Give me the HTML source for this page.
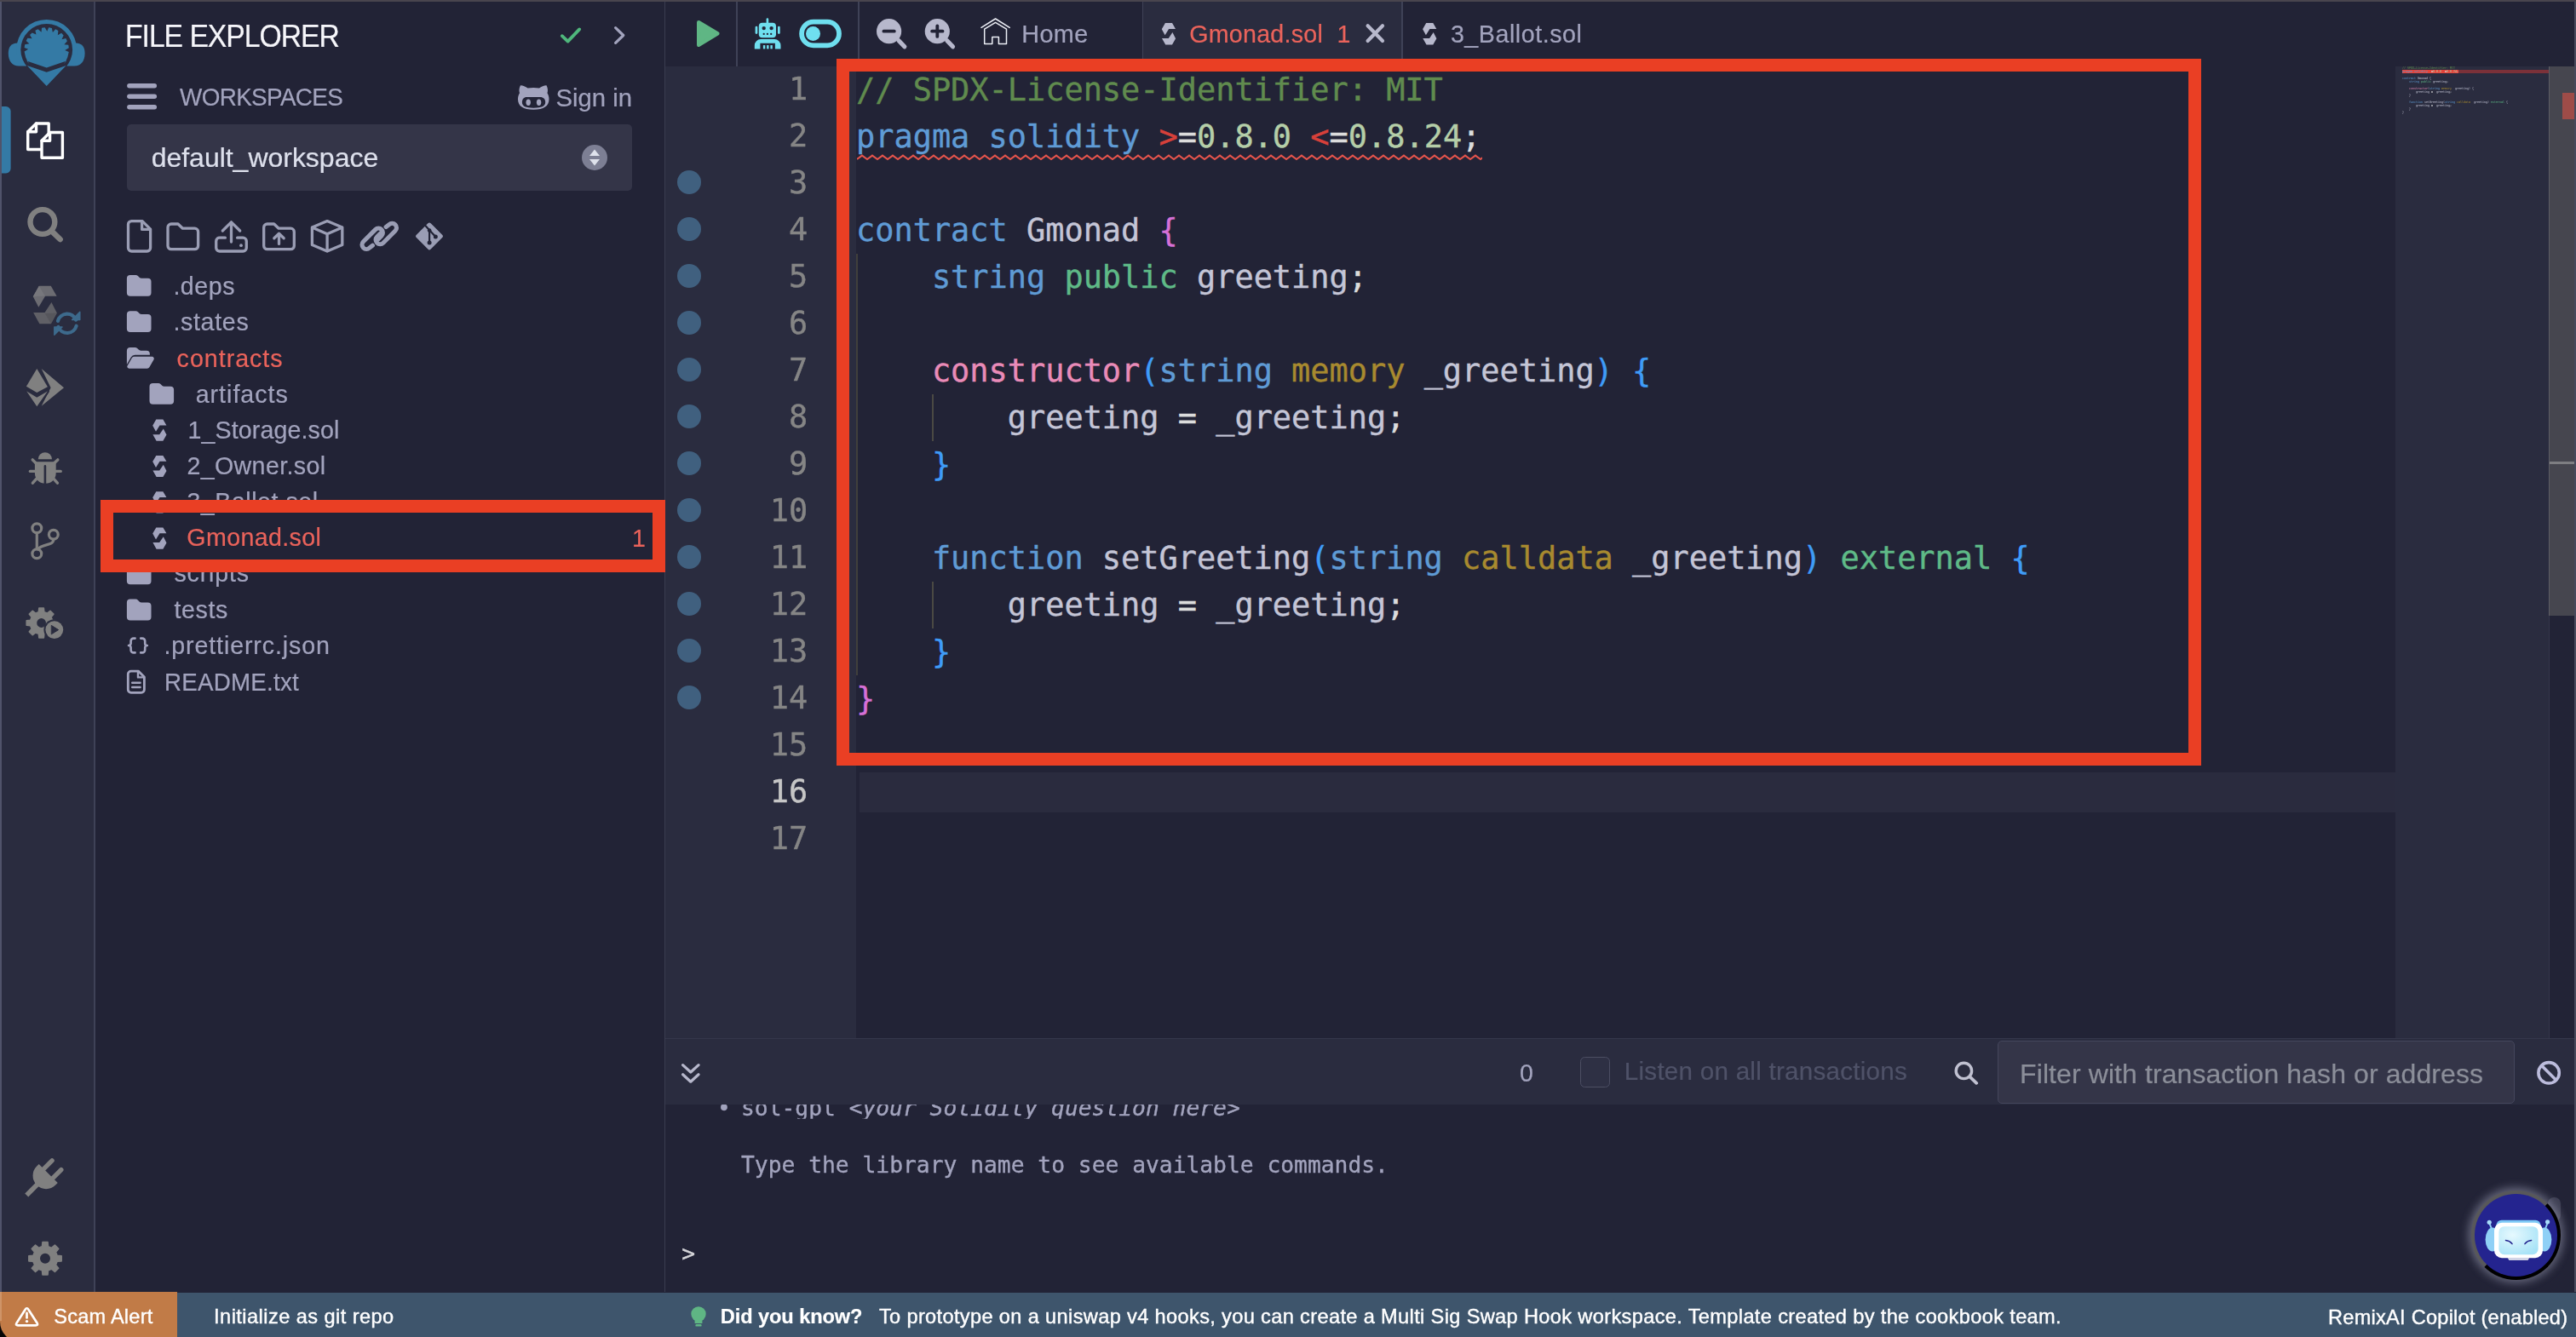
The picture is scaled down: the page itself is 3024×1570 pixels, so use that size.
<!DOCTYPE html>
<html lang="en"><head><meta charset="utf-8"><title>Remix - Ethereum IDE</title><style>
html,body{margin:0;padding:0}
body{width:3024px;height:1570px;overflow:hidden;background:#222336;position:relative;font-family:"Liberation Sans",sans-serif}
.t{position:absolute;white-space:pre;line-height:1;font-family:"Liberation Sans",sans-serif;-webkit-text-stroke:0.22px currentColor}
.m{font-family:"DejaVu Sans Mono","Liberation Mono",monospace;-webkit-text-stroke:0.36px currentColor}
.code{position:absolute;white-space:pre;font-family:"DejaVu Sans Mono","Liberation Mono",monospace;-webkit-text-stroke:0.42px currentColor}
</style></head>
<body>
<div style="position:absolute;left:0px;top:0px;width:3024px;height:2px;background:#49454e;"></div>
<div style="position:absolute;left:0px;top:2px;width:2px;height:1515px;background:#50536a;"></div>
<div style="position:absolute;left:2px;top:2px;width:108px;height:1515px;background:#2a2c3f;"></div>
<div style="position:absolute;left:110px;top:2px;width:2px;height:1515px;background:#3f4257;"></div>
<div style="position:absolute;left:779.5px;top:2px;width:1.5px;height:1515px;background:#3a3c50;"></div>
<div style="position:absolute;left:1342px;top:2px;width:304px;height:76px;background:#2a2c3f;"></div>
<div style="position:absolute;left:864.25px;top:2px;width:1.5px;height:76px;background:#3f4257;"></div>
<div style="position:absolute;left:1007.25px;top:2px;width:1.5px;height:76px;background:#3f4257;"></div>
<div style="position:absolute;left:1340.75px;top:2px;width:1.5px;height:76px;background:#3f4257;"></div>
<div style="position:absolute;left:1645.25px;top:2px;width:1.5px;height:76px;background:#3f4257;"></div>
<div style="position:absolute;left:781px;top:78px;width:224px;height:1141px;background:#2a2c3f;"></div>
<div style="position:absolute;left:2812px;top:78px;width:180px;height:1141px;background:#2a2c3f;"></div>
<div style="position:absolute;left:1009px;top:906.5px;width:1803px;height:47px;background:#2a2b3e;"></div>
<div style="position:absolute;left:2992px;top:78px;width:30px;height:645px;background:#46464f;border-left:1px solid #5c5c64;box-sizing:border-box"></div>
<div style="position:absolute;left:2992px;top:723px;width:1px;height:496px;background:#35364a;"></div>
<div style="position:absolute;left:2993px;top:541.5px;width:29px;height:3.5px;background:#7e7e82;"></div>
<div style="position:absolute;left:3007.5px;top:109px;width:14.5px;height:31px;background:#9e4c48;"></div>
<div style="position:absolute;left:3022px;top:2px;width:2px;height:1515px;background:#484a5c;"></div>
<div style="position:absolute;left:781px;top:1219.4px;width:2241px;height:77.8px;background:#2a2c3f;border-top:1px solid #35374b;box-sizing:border-box"></div>
<div style="position:absolute;left:2990.5px;top:1406px;width:15px;height:28px;background:#3d3e52;border-radius:7px"></div>
<div style="position:absolute;left:0px;top:1517.6px;width:3024px;height:53px;background:#3e556c;"></div>
<div style="position:absolute;left:0px;top:1545px;width:24px;height:25px;background:#050505;"></div>
<div style="position:absolute;left:0px;top:1517px;width:208px;height:59px;background:#c17b47;border-bottom-left-radius:24px"></div>
<div style="position:absolute;left:0px;top:1517px;width:2px;height:34px;background:#cf9468;"></div>
<div style="position:absolute;left:149px;top:146px;width:593px;height:78px;background:#343548;border-radius:5px"></div>
<svg style="position:absolute;left:682.8px;top:169.7px;overflow:visible;" width="30" height="30" viewBox="0 0 30 30"><circle cx="15" cy="15" r="15" fill="#7d7f94"/><path d="M15 5.5 L21 13 H9Z M15 24.5 L21 17 H9Z" fill="#dfe2ec"/></svg>
<div style="position:absolute;left:1855.3px;top:1241.4px;width:34.5px;height:35.2px;background:#2e3044;border:1.6px solid #4c4e63;border-radius:5.5px;box-sizing:border-box"></div>
<div style="position:absolute;left:2344.6px;top:1222.4px;width:607.4px;height:74px;background:#343548;border:1.5px solid #45475c;border-radius:5px;box-sizing:border-box"></div>
<div style="position:absolute;left:794.6px;top:200.29999999999998px;width:28px;height:28px;background:#40607f;border-radius:50%"></div>
<div style="position:absolute;left:794.6px;top:255.3px;width:28px;height:28px;background:#40607f;border-radius:50%"></div>
<div style="position:absolute;left:794.6px;top:310.3px;width:28px;height:28px;background:#40607f;border-radius:50%"></div>
<div style="position:absolute;left:794.6px;top:365.3px;width:28px;height:28px;background:#40607f;border-radius:50%"></div>
<div style="position:absolute;left:794.6px;top:420.3px;width:28px;height:28px;background:#40607f;border-radius:50%"></div>
<div style="position:absolute;left:794.6px;top:475.3px;width:28px;height:28px;background:#40607f;border-radius:50%"></div>
<div style="position:absolute;left:794.6px;top:530.3000000000001px;width:28px;height:28px;background:#40607f;border-radius:50%"></div>
<div style="position:absolute;left:794.6px;top:585.3000000000001px;width:28px;height:28px;background:#40607f;border-radius:50%"></div>
<div style="position:absolute;left:794.6px;top:640.3000000000001px;width:28px;height:28px;background:#40607f;border-radius:50%"></div>
<div style="position:absolute;left:794.6px;top:695.3000000000001px;width:28px;height:28px;background:#40607f;border-radius:50%"></div>
<div style="position:absolute;left:794.6px;top:750.3000000000001px;width:28px;height:28px;background:#40607f;border-radius:50%"></div>
<div style="position:absolute;left:794.6px;top:805.3000000000001px;width:28px;height:28px;background:#40607f;border-radius:50%"></div>
<div class="code" style="left:1005.0px;top:77.83px;font-size:36.92px;line-height:55px;height:55px;"><span style="color:#608b4e">// SPDX-License-Identifier: MIT</span></div>
<div class="code" style="left:1005.0px;top:132.83px;font-size:36.92px;line-height:55px;height:55px;"><span style="color:#5f9bd5">pragma solidity </span><span style="color:#d7403a">&gt;</span><span style="color:#dcdcdc">=</span><span style="color:#b5cea8">0.8.0 </span><span style="color:#d7403a">&lt;</span><span style="color:#dcdcdc">=</span><span style="color:#b5cea8">0.8.24</span><span style="color:#dcdcdc">;</span></div>
<div class="code" style="left:1005.0px;top:187.83px;font-size:36.92px;line-height:55px;height:55px;"></div>
<div class="code" style="left:1005.0px;top:242.83px;font-size:36.92px;line-height:55px;height:55px;"><span style="color:#5f9bd5">contract </span><span style="color:#c4c5d6">Gmonad </span><span style="color:#d670d6">{</span></div>
<div class="code" style="left:1005.0px;top:297.83px;font-size:36.92px;line-height:55px;height:55px;"><span style="color:#5f9bd5">    string </span><span style="color:#5fba87">public </span><span style="color:#c4c5d6">greeting</span><span style="color:#dcdcdc">;</span></div>
<div class="code" style="left:1005.0px;top:352.83px;font-size:36.92px;line-height:55px;height:55px;"></div>
<div class="code" style="left:1005.0px;top:407.83px;font-size:36.92px;line-height:55px;height:55px;"><span style="color:#e98bb8">    constructor</span><span style="color:#3f9cf7">(</span><span style="color:#5f9bd5">string </span><span style="color:#a88a2f">memory </span><span style="color:#c4c5d6">_greeting</span><span style="color:#3f9cf7">) {</span></div>
<div class="code" style="left:1005.0px;top:462.83px;font-size:36.92px;line-height:55px;height:55px;"><span style="color:#c4c5d6">        greeting </span><span style="color:#dcdcdc">= </span><span style="color:#c4c5d6">_greeting</span><span style="color:#dcdcdc">;</span></div>
<div class="code" style="left:1005.0px;top:517.83px;font-size:36.92px;line-height:55px;height:55px;"><span style="color:#3f9cf7">    }</span></div>
<div class="code" style="left:1005.0px;top:572.83px;font-size:36.92px;line-height:55px;height:55px;"></div>
<div class="code" style="left:1005.0px;top:627.83px;font-size:36.92px;line-height:55px;height:55px;"><span style="color:#5f9bd5">    function </span><span style="color:#c4c5d6">setGreeting</span><span style="color:#3f9cf7">(</span><span style="color:#5f9bd5">string </span><span style="color:#a88a2f">calldata </span><span style="color:#c4c5d6">_greeting</span><span style="color:#3f9cf7">) </span><span style="color:#5fba87">external </span><span style="color:#3f9cf7">{</span></div>
<div class="code" style="left:1005.0px;top:682.83px;font-size:36.92px;line-height:55px;height:55px;"><span style="color:#c4c5d6">        greeting </span><span style="color:#dcdcdc">= </span><span style="color:#c4c5d6">_greeting</span><span style="color:#dcdcdc">;</span></div>
<div class="code" style="left:1005.0px;top:737.83px;font-size:36.92px;line-height:55px;height:55px;"><span style="color:#3f9cf7">    }</span></div>
<div class="code" style="left:1005.0px;top:792.83px;font-size:36.92px;line-height:55px;height:55px;"><span style="color:#d670d6">}</span></div>
<div class="code" style="left:1005.0px;top:847.83px;font-size:36.92px;line-height:55px;height:55px;"></div>
<div class="code" style="left:1005.0px;top:902.83px;font-size:36.92px;line-height:55px;height:55px;"></div>
<div class="code" style="left:1005.0px;top:957.83px;font-size:36.92px;line-height:55px;height:55px;"></div>
<div style="position:absolute;left:1005.3px;top:297.5px;width:1.6px;height:495px;background:#403f3c;"></div>
<div style="position:absolute;left:1094.2px;top:462.5px;width:1.6px;height:55px;background:#4a4943;"></div>
<div style="position:absolute;left:1094.2px;top:682.5px;width:1.6px;height:55px;background:#4a4943;"></div>
<svg style="position:absolute;left:1005.6px;top:180.6px;overflow:visible;overflow:hidden" width="734.4" height="8" viewBox="0 0 734.4 8"><path d="M0 6 L6 1.6 L12 6 L18 1.6 L24 6 L30 1.6 L36 6 L42 1.6 L48 6 L54 1.6 L60 6 L66 1.6 L72 6 L78 1.6 L84 6 L90 1.6 L96 6 L102 1.6 L108 6 L114 1.6 L120 6 L126 1.6 L132 6 L138 1.6 L144 6 L150 1.6 L156 6 L162 1.6 L168 6 L174 1.6 L180 6 L186 1.6 L192 6 L198 1.6 L204 6 L210 1.6 L216 6 L222 1.6 L228 6 L234 1.6 L240 6 L246 1.6 L252 6 L258 1.6 L264 6 L270 1.6 L276 6 L282 1.6 L288 6 L294 1.6 L300 6 L306 1.6 L312 6 L318 1.6 L324 6 L330 1.6 L336 6 L342 1.6 L348 6 L354 1.6 L360 6 L366 1.6 L372 6 L378 1.6 L384 6 L390 1.6 L396 6 L402 1.6 L408 6 L414 1.6 L420 6 L426 1.6 L432 6 L438 1.6 L444 6 L450 1.6 L456 6 L462 1.6 L468 6 L474 1.6 L480 6 L486 1.6 L492 6 L498 1.6 L504 6 L510 1.6 L516 6 L522 1.6 L528 6 L534 1.6 L540 6 L546 1.6 L552 6 L558 1.6 L564 6 L570 1.6 L576 6 L582 1.6 L588 6 L594 1.6 L600 6 L606 1.6 L612 6 L618 1.6 L624 6 L630 1.6 L636 6 L642 1.6 L648 6 L654 1.6 L660 6 L666 1.6 L672 6 L678 1.6 L684 6 L690 1.6 L696 6 L702 1.6 L708 6 L714 1.6 L720 6 L726 1.6 L732 6 L738 1.6 L744 6" fill="none" stroke="#e5544c" stroke-width="2" stroke-linejoin="miter"/></svg>
<div style="position:absolute;left:2820px;top:78px;width:172px;height:80px;overflow:hidden"><div style="position:absolute;left:0;top:4px;width:172px;height:4px;background:#7b3139"></div><div style="position:absolute;left:0;top:4px;width:66px;height:4px;background:#e3433a"></div><div style="position:absolute;left:0;top:0;transform-origin:0 0;transform:scale(0.16610);opacity:.8"><div class="code"  style="left:0px;top:0.00px;font-size:20px;line-height:24.082px;height:24.082px;"><span style="color:#608b4e">// SPDX-License-Identifier: MIT</span></div>
<div class="code"  style="left:0px;top:24.08px;font-size:20px;line-height:24.082px;height:24.082px;"><span style="color:#5f9bd5">pragma solidity </span><span style="color:#d7403a">&gt;</span><span style="color:#dcdcdc">=</span><span style="color:#b5cea8">0.8.0 </span><span style="color:#d7403a">&lt;</span><span style="color:#dcdcdc">=</span><span style="color:#b5cea8">0.8.24</span><span style="color:#dcdcdc">;</span></div>
<div class="code"  style="left:0px;top:48.16px;font-size:20px;line-height:24.082px;height:24.082px;"></div>
<div class="code"  style="left:0px;top:72.25px;font-size:20px;line-height:24.082px;height:24.082px;"><span style="color:#5f9bd5">contract </span><span style="color:#c4c5d6">Gmonad </span><span style="color:#b9bacb">{</span></div>
<div class="code"  style="left:0px;top:96.33px;font-size:20px;line-height:24.082px;height:24.082px;"><span style="color:#5f9bd5">    string </span><span style="color:#5fba87">public </span><span style="color:#c4c5d6">greeting</span><span style="color:#dcdcdc">;</span></div>
<div class="code"  style="left:0px;top:120.41px;font-size:20px;line-height:24.082px;height:24.082px;"></div>
<div class="code"  style="left:0px;top:144.49px;font-size:20px;line-height:24.082px;height:24.082px;"><span style="color:#e98bb8">    constructor</span><span style="color:#b9bacb">(</span><span style="color:#5f9bd5">string </span><span style="color:#a88a2f">memory </span><span style="color:#c4c5d6">_greeting</span><span style="color:#b9bacb">) {</span></div>
<div class="code"  style="left:0px;top:168.57px;font-size:20px;line-height:24.082px;height:24.082px;"><span style="color:#c4c5d6">        greeting </span><span style="color:#dcdcdc">= </span><span style="color:#c4c5d6">_greeting</span><span style="color:#dcdcdc">;</span></div>
<div class="code"  style="left:0px;top:192.66px;font-size:20px;line-height:24.082px;height:24.082px;"><span style="color:#b9bacb">    }</span></div>
<div class="code"  style="left:0px;top:216.74px;font-size:20px;line-height:24.082px;height:24.082px;"></div>
<div class="code"  style="left:0px;top:240.82px;font-size:20px;line-height:24.082px;height:24.082px;"><span style="color:#5f9bd5">    function </span><span style="color:#c4c5d6">setGreeting</span><span style="color:#b9bacb">(</span><span style="color:#5f9bd5">string </span><span style="color:#a88a2f">calldata </span><span style="color:#c4c5d6">_greeting</span><span style="color:#b9bacb">) </span><span style="color:#5fba87">external </span><span style="color:#b9bacb">{</span></div>
<div class="code"  style="left:0px;top:264.90px;font-size:20px;line-height:24.082px;height:24.082px;"><span style="color:#c4c5d6">        greeting </span><span style="color:#dcdcdc">= </span><span style="color:#c4c5d6">_greeting</span><span style="color:#dcdcdc">;</span></div>
<div class="code"  style="left:0px;top:288.98px;font-size:20px;line-height:24.082px;height:24.082px;"><span style="color:#b9bacb">    }</span></div>
<div class="code"  style="left:0px;top:313.07px;font-size:20px;line-height:24.082px;height:24.082px;"><span style="color:#b9bacb">}</span></div>
<div class="code"  style="left:0px;top:337.15px;font-size:20px;line-height:24.082px;height:24.082px;"></div>
<div class="code"  style="left:0px;top:361.23px;font-size:20px;line-height:24.082px;height:24.082px;"></div>
<div class="code"  style="left:0px;top:385.31px;font-size:20px;line-height:24.082px;height:24.082px;"></div></div></div>
<div style="position:absolute;left:2901.3px;top:1398.3px;width:104.6px;height:104.6px;border-radius:50%;box-sizing:border-box;background:#24248f;border:4.2px solid #000;border-top-color:#58585a;border-left-color:#58585a;box-shadow:0 0 11px 3px rgba(228,230,255,.36)"></div>
<svg style="position:absolute;left:0;top:0" width="3024" height="1570" viewBox="0 0 3024 1570"><path d="M21 50.5 C12.5 50.5 9.8 55.5 9.8 62.5 C9.8 72 14.5 77.6 22 77.6 L31 77.6 L31 50.5 Z" fill="#347aa5" stroke="none" stroke-width="0" stroke-linecap="round" stroke-linejoin="round" />
<path d="M88.4 50.5 C96.9 50.5 99.60000000000001 55.5 99.60000000000001 62.5 C99.60000000000001 72 94.9 77.6 87.4 77.6 L78.4 77.6 L78.4 50.5 Z" fill="#347aa5" stroke="none" stroke-width="0" stroke-linecap="round" stroke-linejoin="round" />
<path d="M19.200000000000003 58.4 A35.5 35.5 0 0 1 90.2 58.4 V64.4 H19.200000000000003 Z" fill="#347aa5" stroke="none" stroke-width="0" stroke-linecap="round" stroke-linejoin="round" />
<circle cx="54.7" cy="58.4" r="30.4" fill="#2a2c3f" stroke="none" stroke-width="0" />
<path d="M79.32 67.36 L80.78 60.91 L76.29 58.97 L80.82 56.34 L80.28 52.73 L75.41 52.27 L78.91 48.37 L77.27 45.10 L72.50 46.17 L74.62 41.38 L72.06 38.78 L67.85 41.26 L68.39 36.06 L65.15 34.37 L61.91 38.04 L60.82 32.92 L57.21 32.32 L55.27 36.81 L52.64 32.28 L49.03 32.82 L48.57 37.69 L44.67 34.19 L41.40 35.83 L42.47 40.60 L37.68 38.48 L35.08 41.04 L37.56 45.25 L32.36 44.71 L30.67 47.95 L34.34 51.19 L29.22 52.28 L28.62 55.89 L33.11 57.83 L28.58 60.46 L30.08 67.36 L32.01 71.50 L34.63 75.24 L31.30 71.60 L54.70 79.40 L78.10 71.60 L74.77 75.24 L77.39 71.50Z" fill="#347aa5" stroke="none" stroke-width="0" stroke-linecap="round" stroke-linejoin="round" />
<path d="M31.8 77.1 L54.7 84.7 L77.60000000000001 77.1 L54.7 100.9 Z" fill="#347aa5" stroke="none" stroke-width="0" stroke-linecap="round" stroke-linejoin="round" />
<path d="M2 125 H7 a5.6 5.6 0 0 1 5.6 5.6 V197.8 a5.6 5.6 0 0 1 -5.6 5.6 H2 Z" fill="#347aa5" stroke="none" stroke-width="0" stroke-linecap="round" stroke-linejoin="round" />
<path d="M42.5 145 H57.2 V175.5 H32.7 V154.8 Z" fill="#2a2c3f" stroke="#ffffff" stroke-width="3.4" stroke-linecap="round" stroke-linejoin="round" />
<path d="M42.5 145 V154.8 H32.7" fill="none" stroke="#ffffff" stroke-width="3.4" stroke-linecap="round" stroke-linejoin="round" />
<path d="M58.6 155.5 H73.4 V185.2 H49 V165.2 Z" fill="#2a2c3f" stroke="#ffffff" stroke-width="3.4" stroke-linecap="round" stroke-linejoin="round" />
<path d="M58.6 155.5 V165.2 H49" fill="none" stroke="#ffffff" stroke-width="3.4" stroke-linecap="round" stroke-linejoin="round" />
<circle cx="49.9" cy="260.5" r="14.4" fill="none" stroke="#808080" stroke-width="6.4" />
<path d="M60.6 271.3 L70.6 281" fill="none" stroke="#808080" stroke-width="6.6" stroke-linecap="round" stroke-linejoin="round" />
<path d="M45.84 335.80 L59.76 335.80 L66.63 347.79 L53.06 347.79 L45.33 360.66 L38.80 348.32Z" fill="#6c6c72" stroke="none" stroke-width="0" stroke-linecap="round" stroke-linejoin="round" />
<path d="M39.14 366.92 L52.54 366.92 L60.44 354.92 L66.80 367.61 L59.76 380.30 L46.36 380.30Z" fill="#606066" stroke="none" stroke-width="0" stroke-linecap="round" stroke-linejoin="round" />
<path d="M45.8 335.8 L52.8 347.5 L38.8 348.3 Z" fill="#77777c" stroke="none" stroke-width="0" stroke-linecap="round" stroke-linejoin="round" />
<path d="M59.8 380.3 L52.8 368 L66.8 367.6 Z" fill="#56565c" stroke="none" stroke-width="0" stroke-linecap="round" stroke-linejoin="round" />
<path d="M67.98 376.90 A11.2 11.2 0 0 1 89.18 375.60" fill="none" stroke="#3d6a8c" stroke-width="4.2" stroke-linecap="round" stroke-linejoin="round" />
<path d="M89.62 382.70 A11.2 11.2 0 0 1 68.42 384.00" fill="none" stroke="#3d6a8c" stroke-width="4.2" stroke-linecap="round" stroke-linejoin="round" />
<path d="M93.8 366.4 V375.6 H84.6 Z" fill="#3d6a8c" stroke="#3d6a8c" stroke-width="1.5" stroke-linecap="round" stroke-linejoin="round" />
<path d="M63.8 393.2 V384 H73 Z" fill="#3d6a8c" stroke="#3d6a8c" stroke-width="1.5" stroke-linecap="round" stroke-linejoin="round" />
<path d="M48.7 432.9 L75 455.3 L48.7 476.8 L59.6 455.3 Z" fill="#808080" stroke="none" stroke-width="0" stroke-linecap="round" stroke-linejoin="round" />
<path d="M43.3 432.9 L55.9 454.2 L43.3 461 L30.9 453.8 Z" fill="#808080" stroke="#2a2c3f" stroke-width="4.6" stroke-linecap="round" stroke-linejoin="round" paint-order="stroke"/>
<path d="M31.3 459.6 L43.3 466.7 L55.8 459.6 L43.3 477.3 Z" fill="#808080" stroke="#2a2c3f" stroke-width="4.2" stroke-linecap="round" stroke-linejoin="round" paint-order="stroke"/>
<path d="M44.8 539.3 a8.1 8.1 0 0 1 16.2 0 Z" fill="#808080" stroke="none" stroke-width="0" stroke-linecap="round" stroke-linejoin="round" />
<path d="M40.9 542.3 H65.7 V555.5 C65.7 563 60 567.8 53.3 567.8 C46.6 567.8 40.9 563 40.9 555.5 Z" fill="#808080" stroke="none" stroke-width="0" stroke-linecap="round" stroke-linejoin="round" />
<path d="M52.9 547.4 V569" fill="none" stroke="#2a2c3f" stroke-width="2.6" stroke-linecap="round" stroke-linejoin="round" />
<path d="M40.9 553.4 H35.4" fill="none" stroke="#808080" stroke-width="3.4" stroke-linecap="round" stroke-linejoin="round" />
<path d="M65.7 553.4 H71.2" fill="none" stroke="#808080" stroke-width="3.4" stroke-linecap="round" stroke-linejoin="round" />
<path d="M42.1 543.8 L38.2 539.9" fill="none" stroke="#808080" stroke-width="3.4" stroke-linecap="round" stroke-linejoin="round" />
<path d="M63.7 543.8 L67.8 539.9" fill="none" stroke="#808080" stroke-width="3.4" stroke-linecap="round" stroke-linejoin="round" />
<path d="M42.7 562.4 L38.4 567.2" fill="none" stroke="#808080" stroke-width="3.4" stroke-linecap="round" stroke-linejoin="round" />
<path d="M63.1 562.4 L67.4 567.2" fill="none" stroke="#808080" stroke-width="3.4" stroke-linecap="round" stroke-linejoin="round" />
<circle cx="43.3" cy="620.2" r="5.4" fill="none" stroke="#808080" stroke-width="3.2" />
<circle cx="43.3" cy="650.3" r="5.4" fill="none" stroke="#808080" stroke-width="3.2" />
<circle cx="62.8" cy="627.8" r="5.4" fill="none" stroke="#808080" stroke-width="3.2" />
<path d="M43.3 626 V644.6" fill="none" stroke="#808080" stroke-width="3.2" stroke-linecap="round" stroke-linejoin="round" />
<path d="M62.8 633.6 C62.8 641.5 49 638 44.6 645" fill="none" stroke="#808080" stroke-width="3.2" stroke-linecap="round" stroke-linejoin="round" />
<path d="M60.94 726.81 L61.40 728.29 L65.98 728.75 L65.98 734.25 L61.40 734.71 L60.64 736.91 L59.92 738.29 L62.84 741.85 L58.95 745.74 L55.39 742.82 L53.29 743.84 L51.81 744.30 L51.35 748.88 L45.85 748.88 L45.39 744.30 L43.19 743.54 L41.81 742.82 L38.25 745.74 L34.36 741.85 L37.28 738.29 L36.26 736.19 L35.80 734.71 L31.22 734.25 L31.22 728.75 L35.80 728.29 L36.56 726.09 L37.28 724.71 L34.36 721.15 L38.25 717.26 L41.81 720.18 L43.91 719.16 L45.39 718.70 L45.85 714.12 L51.35 714.12 L51.81 718.70 L54.01 719.46 L55.39 720.18 L58.95 717.26 L62.84 721.15 L59.92 724.71Z M54.800000000000004 731.5 a6.2 6.2 0 1 0 -12.4 0 a6.2 6.2 0 1 0 12.4 0Z" fill="#808080" fill-rule="evenodd" stroke="#808080" stroke-width="1.6" stroke-linejoin="round"/>
<circle cx="63.8" cy="739.6" r="12.4" fill="#2a2c3f" stroke="none" stroke-width="0" />
<circle cx="63.8" cy="739.6" r="10.4" fill="#808080" stroke="none" stroke-width="0" />
<path d="M60.6 734.6 L68.6 739.6 L60.6 744.6 Z" fill="#2a2c3f" stroke="#2a2c3f" stroke-width="1" stroke-linecap="round" stroke-linejoin="round" />
<path d="M66.46 1472.68 L66.97 1474.30 L72.16 1474.77 L72.16 1480.83 L66.97 1481.30 L66.14 1483.70 L65.35 1485.20 L68.69 1489.20 L64.40 1493.49 L60.40 1490.15 L58.12 1491.26 L56.50 1491.77 L56.03 1496.96 L49.97 1496.96 L49.50 1491.77 L47.10 1490.94 L45.60 1490.15 L41.60 1493.49 L37.31 1489.20 L40.65 1485.20 L39.54 1482.92 L39.03 1481.30 L33.84 1480.83 L33.84 1474.77 L39.03 1474.30 L39.86 1471.90 L40.65 1470.40 L37.31 1466.40 L41.60 1462.11 L45.60 1465.45 L47.88 1464.34 L49.50 1463.83 L49.97 1458.64 L56.03 1458.64 L56.50 1463.83 L58.90 1464.66 L60.40 1465.45 L64.40 1462.11 L68.69 1466.40 L65.35 1470.40Z M59.8 1477.8 a6.8 6.8 0 1 0 -13.6 0 a6.8 6.8 0 1 0 13.6 0Z" fill="#808080" fill-rule="evenodd" stroke="#808080" stroke-width="1.6" stroke-linejoin="round"/>
<g transform="translate(56.7,1378) rotate(45)">
<path d="M-7.6 0 V-13.8 M7.6 0 V-13.8" fill="none" stroke="#808080" stroke-width="5.4" stroke-linecap="round" stroke-linejoin="round" />
<path d="M-15.6 0 H15.6 V3.6 A15.6 15.6 0 0 1 -15.6 3.6 Z" fill="#808080" stroke="none" stroke-width="0" stroke-linecap="round" stroke-linejoin="round" />
<path d="M0 16 V36" fill="none" stroke="#808080" stroke-width="5.6" stroke-linecap="butt"/>
</g>
<path d="M659.8 42.2 L666.6 48.6 L680.2 34.4" fill="none" stroke="#4fb77c" stroke-width="3.8" stroke-linecap="round" stroke-linejoin="round" />
<path d="M722.6 32.6 L731.8 41.5 L722.6 50.4" fill="none" stroke="#a2a3bd" stroke-width="3.2" stroke-linecap="round" stroke-linejoin="round" />
<path d="M151.9 100.8 H181.3" fill="none" stroke="#a2a3bd" stroke-width="5.5" stroke-linecap="round" stroke-linejoin="round" />
<path d="M151.9 113.3 H181.3" fill="none" stroke="#a2a3bd" stroke-width="5.5" stroke-linecap="round" stroke-linejoin="round" />
<path d="M151.9 125.7 H181.3" fill="none" stroke="#a2a3bd" stroke-width="5.5" stroke-linecap="round" stroke-linejoin="round" />
<path d="M611 100.3 C609.5 103 609 106.5 610 109.3 C608.6 111.5 608 113.8 608 116.5 C608 124.5 614 128.7 626.2 128.7 C638.5 128.7 644.5 124.5 644.5 116.5 C644.5 113.8 643.9 111.5 642.5 109.3 C643.5 106.5 643 103 641.5 100.3 C638.5 100.4 635.6 101.8 633 103.6 C628.6 102.7 623.9 102.7 619.5 103.6 C616.9 101.8 614 100.4 611 100.3 Z" fill="#a2a3bd" stroke="none" stroke-width="0" stroke-linecap="round" stroke-linejoin="round" />
<path d="M618.5 114 H634 C638 114 640.2 116.6 640.2 120 C640.2 124.8 635.5 126.7 626.3 126.7 C617 126.7 612.9 124.8 612.9 120 C612.9 116.6 614.8 114 618.5 114 Z" fill="#222336" stroke="none" stroke-width="0" stroke-linecap="round" stroke-linejoin="round" />
<ellipse cx="620.2" cy="120.2" rx="2.7" ry="3.7" fill="#a2a3bd"/><ellipse cx="632.6" cy="120.2" rx="2.7" ry="3.7" fill="#a2a3bd"/>
<path d="M154.5 259.6 H167 L176.6 269.2 V291 a4 4 0 0 1 -4 4 H154.5 a4 4 0 0 1 -4 -4 V263.6 a4 4 0 0 1 4 -4 Z" fill="none" stroke="#9a9db4" stroke-width="3.3" stroke-linecap="round" stroke-linejoin="round" />
<path d="M166.6 260 V269.4 H176.4" fill="none" stroke="#9a9db4" stroke-width="3.3" stroke-linecap="round" stroke-linejoin="round" />
<path d="M201 263 H209 L214.5 268.2 H228.6 a4 4 0 0 1 4 4 V288.7 a4 4 0 0 1 -4 4 H201 a4 4 0 0 1 -4 -4 V267 a4 4 0 0 1 4 -4 Z" fill="none" stroke="#9a9db4" stroke-width="3.3" stroke-linecap="round" stroke-linejoin="round" />
<path d="M271.5 261 V284 M261.3 271 L271.5 260.8 L281.7 271" fill="none" stroke="#9a9db4" stroke-width="3.3" stroke-linecap="round" stroke-linejoin="round" />
<path d="M264.4 279.2 H257.7 a4 4 0 0 0 -4 4 V291 a4 4 0 0 0 4 4 H285.3 a4 4 0 0 0 4 -4 V283.2 a4 4 0 0 0 -4 -4 H278.6" fill="none" stroke="#9a9db4" stroke-width="3.3" stroke-linecap="round" stroke-linejoin="round" />
<circle cx="283" cy="288.2" r="1.9" fill="#9a9db4" stroke="none" stroke-width="0" />
<path d="M313.7 263 H321.7 L327.2 268.2 H341.3 a4 4 0 0 1 4 4 V288.7 a4 4 0 0 1 -4 4 H313.7 a4 4 0 0 1 -4 -4 V267 a4 4 0 0 1 4 -4 Z" fill="none" stroke="#9a9db4" stroke-width="3.3" stroke-linecap="round" stroke-linejoin="round" />
<path d="M327.5 274.4 V286.4 M321.8 279.8 L327.5 274.2 L333.2 279.8" fill="none" stroke="#9a9db4" stroke-width="3.3" stroke-linecap="round" stroke-linejoin="round" />
<path d="M384.1 259.6 L401.8 267 V287.6 L384.1 295 L366.4 287.6 V267 Z" fill="none" stroke="#9a9db4" stroke-width="3.3" stroke-linecap="round" stroke-linejoin="round" />
<path d="M366.8 267.2 L384.1 274.8 L401.4 267.2 M384.1 274.8 V294.6" fill="none" stroke="#9a9db4" stroke-width="3.3" stroke-linecap="round" stroke-linejoin="round" />
<g transform="translate(437.2,280.3) rotate(-45)">
<path d="M-5.5 5.75 L-10 5.15 A5.15 5.15 0 0 1 -10 -5.15 H10 A5.15 5.15 0 0 1 10 5.15 H4" fill="none" stroke="#9a9db4" stroke-width="5.1" stroke-linecap="round" stroke-linejoin="round" />
</g>
<g transform="translate(453.3,274.5) rotate(-45)">
<path d="M5.5 -5.75 L10 -5.15 A5.15 5.15 0 0 1 10 5.15 H-10 A5.15 5.15 0 0 1 -10 -5.15 H-4" fill="none" stroke="#9a9db4" stroke-width="5.1" stroke-linecap="round" stroke-linejoin="round" />
</g>
<g transform="translate(504,277.4) rotate(45)">
<rect x="-11.9" y="-11.9" width="23.8" height="23.8" rx="2.4" fill="#9a9db4"/>
</g>
<path d="M499.4 265 L511.3 278 M504.1 270.5 V285" fill="none" stroke="#222336" stroke-width="2.2" stroke-linecap="round" stroke-linejoin="round" />
<circle cx="504.1" cy="285" r="2.5" fill="#222336" stroke="none" stroke-width="0" />
<circle cx="511.3" cy="278" r="2.5" fill="#222336" stroke="none" stroke-width="0" />
<circle cx="504.1" cy="270.6" r="2.3" fill="#222336" stroke="none" stroke-width="0" />
<path d="M148.9 326.9 a4 4 0 0 1 4 -4 h6.4 a3.6 3.6 0 0 1 2.6 1.1 l1.7 1.7 a3.6 3.6 0 0 0 2.6 1.1 h7.3 a4 4 0 0 1 4 4 v13 a4 4 0 0 1 -4 4 h-20.6 a4 4 0 0 1 -4 -4 z" fill="#a2a3bd" stroke="none" stroke-width="0" stroke-linecap="round" stroke-linejoin="round" />
<path d="M148.9 369.2 a4 4 0 0 1 4 -4 h6.4 a3.6 3.6 0 0 1 2.6 1.1 l1.7 1.7 a3.6 3.6 0 0 0 2.6 1.1 h7.3 a4 4 0 0 1 4 4 v13 a4 4 0 0 1 -4 4 h-20.6 a4 4 0 0 1 -4 -4 z" fill="#a2a3bd" stroke="none" stroke-width="0" stroke-linecap="round" stroke-linejoin="round" />
<path d="M175.5 453.9 a4 4 0 0 1 4 -4 h6.4 a3.6 3.6 0 0 1 2.6 1.1 l1.7 1.7 a3.6 3.6 0 0 0 2.6 1.1 h7.3 a4 4 0 0 1 4 4 v13 a4 4 0 0 1 -4 4 h-20.6 a4 4 0 0 1 -4 -4 z" fill="#a2a3bd" stroke="none" stroke-width="0" stroke-linecap="round" stroke-linejoin="round" />
<path d="M148.9 665.3 a4 4 0 0 1 4 -4 h6.4 a3.6 3.6 0 0 1 2.6 1.1 l1.7 1.7 a3.6 3.6 0 0 0 2.6 1.1 h7.3 a4 4 0 0 1 4 4 v13 a4 4 0 0 1 -4 4 h-20.6 a4 4 0 0 1 -4 -4 z" fill="#a2a3bd" stroke="none" stroke-width="0" stroke-linecap="round" stroke-linejoin="round" />
<path d="M148.9 707.5999999999999 a4 4 0 0 1 4 -4 h6.4 a3.6 3.6 0 0 1 2.6 1.1 l1.7 1.7 a3.6 3.6 0 0 0 2.6 1.1 h7.3 a4 4 0 0 1 4 4 v13 a4 4 0 0 1 -4 4 h-20.6 a4 4 0 0 1 -4 -4 z" fill="#a2a3bd" stroke="none" stroke-width="0" stroke-linecap="round" stroke-linejoin="round" />
<path d="M148.9 411.9 a4 4 0 0 1 4 -4 h5.6 a3.6 3.6 0 0 1 2.6 1.1 l1.6 1.6 a3.6 3.6 0 0 0 2.6 1.1 h6.6 a4 4 0 0 1 4 4 v1 h-17.4 a5.4 5.4 0 0 0 -4.7 2.7 l-4.9 8.6 z" fill="#a2a3bd" stroke="none" stroke-width="0" stroke-linecap="round" stroke-linejoin="round" />
<path d="M158.2 418.7 H178.4 a2.4 2.4 0 0 1 2.1 3.6 l-5 8.8 a3.2 3.2 0 0 1 -2.8 1.6 H151.5 a2.2 2.2 0 0 1 -1.9 -3.3 l5.4 -9.3 a3.6 3.6 0 0 1 3.2 -1.4 z" fill="#a2a3bd" stroke="none" stroke-width="0" stroke-linecap="round" stroke-linejoin="round" />
<path d="M183.30 492.60 L191.40 492.60 L195.40 499.39 L187.50 499.39 L183.00 506.68 L179.20 499.69Z" fill="#a2a3bd" stroke="none" stroke-width="0" stroke-linecap="round" stroke-linejoin="round" />
<path d="M179.40 510.22 L187.20 510.22 L191.80 503.43 L195.50 510.61 L191.40 517.80 L183.60 517.80Z" fill="#a2a3bd" stroke="none" stroke-width="0" stroke-linecap="round" stroke-linejoin="round" />
<path d="M183.30 534.90 L191.40 534.90 L195.40 541.69 L187.50 541.69 L183.00 548.98 L179.20 541.99Z" fill="#a2a3bd" stroke="none" stroke-width="0" stroke-linecap="round" stroke-linejoin="round" />
<path d="M179.40 552.52 L187.20 552.52 L191.80 545.73 L195.50 552.91 L191.40 560.10 L183.60 560.10Z" fill="#a2a3bd" stroke="none" stroke-width="0" stroke-linecap="round" stroke-linejoin="round" />
<path d="M183.30 577.20 L191.40 577.20 L195.40 583.99 L187.50 583.99 L183.00 591.28 L179.20 584.29Z" fill="#a2a3bd" stroke="none" stroke-width="0" stroke-linecap="round" stroke-linejoin="round" />
<path d="M179.40 594.82 L187.20 594.82 L191.80 588.03 L195.50 595.21 L191.40 602.40 L183.60 602.40Z" fill="#a2a3bd" stroke="none" stroke-width="0" stroke-linecap="round" stroke-linejoin="round" />
<path d="M183.30 619.50 L191.40 619.50 L195.40 626.29 L187.50 626.29 L183.00 633.58 L179.20 626.59Z" fill="#a2a3bd" stroke="none" stroke-width="0" stroke-linecap="round" stroke-linejoin="round" />
<path d="M179.40 637.12 L187.20 637.12 L191.80 630.33 L195.50 637.51 L191.40 644.70 L183.60 644.70Z" fill="#a2a3bd" stroke="none" stroke-width="0" stroke-linecap="round" stroke-linejoin="round" />
<path d="M158.6 749.6 h-1.8 a3.2 3.2 0 0 0 -3.2 3.2 v2.6 a2.6 2.6 0 0 1 -2.6 2.6 a2.6 2.6 0 0 1 2.6 2.6 v2.6 a3.2 3.2 0 0 0 3.2 3.2 h1.8" fill="none" stroke="#a2a3bd" stroke-width="2.6" stroke-linecap="round" stroke-linejoin="round" />
<path d="M165.2 749.6 h1.8 a3.2 3.2 0 0 1 3.2 3.2 v2.6 a2.6 2.6 0 0 0 2.6 2.6 a2.6 2.6 0 0 0 -2.6 2.6 v2.6 a3.2 3.2 0 0 1 -3.2 3.2 h-1.8" fill="none" stroke="#a2a3bd" stroke-width="2.6" stroke-linecap="round" stroke-linejoin="round" />
<path d="M153.8 788.1 H162.4 L169.4 795.1 V809.8 a3.5 3.5 0 0 1 -3.5 3.5 H153.8 a3.5 3.5 0 0 1 -3.5 -3.5 V791.6 a3.5 3.5 0 0 1 3.5 -3.5 Z" fill="none" stroke="#a2a3bd" stroke-width="2.8" stroke-linecap="round" stroke-linejoin="round" />
<path d="M162 788.6 V795.4 H169" fill="none" stroke="#a2a3bd" stroke-width="2.4" stroke-linecap="round" stroke-linejoin="round" />
<path d="M155.2 801.8 H164.6 M155.2 807 H164.6" fill="none" stroke="#a2a3bd" stroke-width="2.4" stroke-linecap="round" stroke-linejoin="round" />
<path d="M820.2 26.2 L842.4 39.4 L820.2 52.8 Z" fill="#5fb684" stroke="#5fb684" stroke-width="4.4" stroke-linecap="round" stroke-linejoin="round" />
<path d="M900.9 22.6 V27.4" fill="none" stroke="#6fdfef" stroke-width="2.6" stroke-linecap="round" stroke-linejoin="round" />
<rect x="890.8" y="26.7" width="20.2" height="17.5" rx="4" fill="#6fdfef"/>
<rect x="886.6" y="30.8" width="2.7" height="9.1" rx="1.3" fill="#6fdfef"/><rect x="913" y="30.8" width="2.7" height="9.1" rx="1.3" fill="#6fdfef"/>
<circle cx="896.7" cy="33.1" r="2.2" fill="#222336" stroke="none" stroke-width="0" />
<circle cx="905.6" cy="33.1" r="2.2" fill="#222336" stroke="none" stroke-width="0" />
<circle cx="896.7" cy="39.9" r="1.15" fill="#222336" stroke="none" stroke-width="0" />
<circle cx="900.9" cy="39.9" r="1.15" fill="#222336" stroke="none" stroke-width="0" />
<circle cx="905.2" cy="39.9" r="1.15" fill="#222336" stroke="none" stroke-width="0" />
<path d="M885.8 57.4 V53.4 a7.3 7.3 0 0 1 7.3 -7.3 H909.2 a7.3 7.3 0 0 1 7.3 7.3 V57.4 H909.9 V50.8 H892.4 V57.4 Z" fill="#6fdfef" stroke="none" stroke-width="0" stroke-linecap="round" stroke-linejoin="round" />
<rect x="895.9" y="53.1" width="2.4" height="4.3" fill="#6fdfef"/><rect x="900.1" y="53.1" width="2.4" height="4.3" fill="#6fdfef"/><rect x="904.4" y="53.1" width="2.4" height="4.3" fill="#6fdfef"/>
<rect x="941.1" y="25.7" width="43.9" height="27.6" rx="13.8" fill="none" stroke="#6fdfef" stroke-width="5.8"/>
<circle cx="954.5" cy="39.5" r="8.5" fill="#6fdfef" stroke="none" stroke-width="0" />
<circle cx="1043.6" cy="36.7" r="14.6" fill="#b7b8cc" stroke="none" stroke-width="0" />
<path d="M1055.1 47.8 L1061.8 54.8" fill="none" stroke="#b7b8cc" stroke-width="5.2" stroke-linecap="round" stroke-linejoin="round" />
<path d="M1037.3999999999999 36.7 H1049.8" fill="none" stroke="#222336" stroke-width="3.8" stroke-linecap="round" stroke-linejoin="round" />
<circle cx="1100.3" cy="36.7" r="14.6" fill="#b7b8cc" stroke="none" stroke-width="0" />
<path d="M1111.8 47.8 L1118.5 54.8" fill="none" stroke="#b7b8cc" stroke-width="5.2" stroke-linecap="round" stroke-linejoin="round" />
<path d="M1094.1 36.7 H1106.5" fill="none" stroke="#222336" stroke-width="3.8" stroke-linecap="round" stroke-linejoin="round" />
<path d="M1100.3 30.5 V42.9" fill="none" stroke="#222336" stroke-width="3.8" stroke-linecap="round" stroke-linejoin="round" />
<path d="M1152 32.4 L1168.6 22 L1185.2 32.4" fill="none" stroke="#eceef5" stroke-width="1.5" stroke-linecap="round" stroke-linejoin="round" />
<path d="M1155.7 34.2 L1168.6 26.4 L1181.5 34.2 V51.4 H1172.4 V43.4 H1164.8 V51.4 H1155.7 Z" fill="none" stroke="#eceef5" stroke-width="1.5" stroke-linecap="round" stroke-linejoin="round" />
<path d="M1367.90 27.00 L1376.00 27.00 L1380.00 33.90 L1372.10 33.90 L1367.60 41.30 L1363.80 34.20Z" fill="#b7b8cc" stroke="none" stroke-width="0" stroke-linecap="round" stroke-linejoin="round" />
<path d="M1364.00 44.90 L1371.80 44.90 L1376.40 38.00 L1380.10 45.30 L1376.00 52.60 L1368.20 52.60Z" fill="#b7b8cc" stroke="none" stroke-width="0" stroke-linecap="round" stroke-linejoin="round" />
<path d="M1674.20 27.00 L1682.30 27.00 L1686.30 33.90 L1678.40 33.90 L1673.90 41.30 L1670.10 34.20Z" fill="#b7b8cc" stroke="none" stroke-width="0" stroke-linecap="round" stroke-linejoin="round" />
<path d="M1670.30 44.90 L1678.10 44.90 L1682.70 38.00 L1686.40 45.30 L1682.30 52.60 L1674.50 52.60Z" fill="#b7b8cc" stroke="none" stroke-width="0" stroke-linecap="round" stroke-linejoin="round" />
<path d="M1605.6 30.2 L1623 48 M1623 30.2 L1605.6 48" fill="none" stroke="#b7b8cc" stroke-width="4.2" stroke-linecap="round" stroke-linejoin="round" />
<path d="M801.6 1250.6 L810.8 1259 L820 1250.6 M801.6 1261.8 L810.8 1270.2 L820 1261.8" fill="none" stroke="#b7b8cc" stroke-width="3.2" stroke-linecap="round" stroke-linejoin="round" />
<circle cx="2305.4" cy="1257.4" r="9.2" fill="none" stroke="#c0c1d1" stroke-width="3.4" />
<path d="M2312.6 1264.6 L2320.2 1271.8" fill="none" stroke="#c0c1d1" stroke-width="3.8" stroke-linecap="round" stroke-linejoin="round" />
<circle cx="2992.1" cy="1259.8" r="12.2" fill="none" stroke="#bcbcdc" stroke-width="3.6" />
<path d="M2983.6 1251.3 L3000.6 1268.3" fill="none" stroke="#bcbcdc" stroke-width="3.6" stroke-linecap="round" stroke-linejoin="round" />
<path d="M29.5 1537.9 Q31.5 1534.6 33.5 1537.9 L43.5 1553.6 Q45.2 1556.3 41.9 1556.3 H21.1 Q17.8 1556.3 19.5 1553.6 Z" fill="none" stroke="#fff" stroke-width="2.7" stroke-linecap="round" stroke-linejoin="round" />
<path d="M31.5 1541.8 V1547.4" fill="none" stroke="#fff" stroke-width="2.7" stroke-linecap="round" stroke-linejoin="round" />
<circle cx="31.5" cy="1551.6" r="1.7" fill="#fff" stroke="none" stroke-width="0" />
<circle cx="820" cy="1543" r="8.7" fill="#5fb684" stroke="none" stroke-width="0" />
<rect x="815.6" y="1549" width="8.8" height="5" fill="#5fb684"/><rect x="816.4" y="1555" width="7.2" height="2.6" rx="1.2" fill="#5fb684"/>
<ellipse cx="2926" cy="1455.6" rx="8.4" ry="14" fill="#8fd0f6"/><ellipse cx="2987" cy="1455.6" rx="8.4" ry="14" fill="#8fd0f6"/>
<path d="M2922.4 1436.5 L2926.6 1447 M2990.6 1436 L2986.4 1447" fill="none" stroke="#8fd0f6" stroke-width="2" stroke-linecap="round" stroke-linejoin="round" />
<circle cx="2922.2" cy="1435.3" r="2.6" fill="#a8dcf8" stroke="none" stroke-width="0" />
<circle cx="2990.6" cy="1434.8" r="2.6" fill="#a8dcf8" stroke="none" stroke-width="0" />
<rect x="2930.5" y="1432.8" width="52" height="12" rx="6" fill="#7cc8f6"/>
<rect x="2928" y="1435.8" width="57" height="41.4" rx="9" fill="#ffffff"/>
<defs><radialGradient id="face" cx="0.35" cy="0.3" r="0.8"><stop offset="0" stop-color="#e6f9fe"/><stop offset="1" stop-color="#a6e2f7"/></radialGradient></defs>
<rect x="2933.4" y="1440.2" width="46.2" height="33" rx="6.5" fill="url(#face)"/>
<path d="M2943.8 1477.2 H2969.2 L2967.6 1479.8 H2945.4 Z" fill="#e9ecf2" stroke="none" stroke-width="0" stroke-linecap="round" stroke-linejoin="round" />
<path d="M2941.5 1456.6 Q2946 1457 2949 1460.6 M2971.6 1456.6 Q2967 1457 2964 1460.6" fill="none" stroke="#24248f" stroke-width="1.5" stroke-linecap="round" stroke-linejoin="round" /></svg>
<span class="t m" style="left:925.98px;top:87.37px;font-size:36.92px;color:#858585;-webkit-text-stroke-width:0.42px;">1</span>
<span class="t m" style="left:925.98px;top:142.37px;font-size:36.92px;color:#858585;-webkit-text-stroke-width:0.42px;">2</span>
<span class="t m" style="left:925.98px;top:197.37px;font-size:36.92px;color:#858585;-webkit-text-stroke-width:0.42px;">3</span>
<span class="t m" style="left:925.98px;top:252.37px;font-size:36.92px;color:#858585;-webkit-text-stroke-width:0.42px;">4</span>
<span class="t m" style="left:925.98px;top:307.37px;font-size:36.92px;color:#858585;-webkit-text-stroke-width:0.42px;">5</span>
<span class="t m" style="left:925.98px;top:362.37px;font-size:36.92px;color:#858585;-webkit-text-stroke-width:0.42px;">6</span>
<span class="t m" style="left:925.98px;top:417.37px;font-size:36.92px;color:#858585;-webkit-text-stroke-width:0.42px;">7</span>
<span class="t m" style="left:925.98px;top:472.37px;font-size:36.92px;color:#858585;-webkit-text-stroke-width:0.42px;">8</span>
<span class="t m" style="left:925.98px;top:527.37px;font-size:36.92px;color:#858585;-webkit-text-stroke-width:0.42px;">9</span>
<span class="t m" style="left:903.76px;top:582.37px;font-size:36.92px;color:#858585;-webkit-text-stroke-width:0.42px;">10</span>
<span class="t m" style="left:903.76px;top:637.37px;font-size:36.92px;color:#858585;-webkit-text-stroke-width:0.42px;">11</span>
<span class="t m" style="left:903.76px;top:692.37px;font-size:36.92px;color:#858585;-webkit-text-stroke-width:0.42px;">12</span>
<span class="t m" style="left:903.76px;top:747.37px;font-size:36.92px;color:#858585;-webkit-text-stroke-width:0.42px;">13</span>
<span class="t m" style="left:903.76px;top:802.37px;font-size:36.92px;color:#858585;-webkit-text-stroke-width:0.42px;">14</span>
<span class="t m" style="left:903.76px;top:857.37px;font-size:36.92px;color:#858585;-webkit-text-stroke-width:0.42px;">15</span>
<span class="t m" style="left:903.76px;top:912.37px;font-size:36.92px;color:#c6c6c6;-webkit-text-stroke-width:0.42px;">16</span>
<span class="t m" style="left:903.76px;top:967.37px;font-size:36.92px;color:#858585;-webkit-text-stroke-width:0.42px;">17</span>
<span class="t" style="left:147.04px;top:25.27px;font-size:36.3px;color:#f6f6fa;letter-spacing:-1.131px;transform:scaleX(0.93);transform-origin:0 0;">FILE EXPLORER</span>
<span class="t" style="left:211.20px;top:99.00px;font-size:29.3px;color:#a2a3bd;letter-spacing:-0.657px;transform:scaleX(0.95);transform-origin:0 0;">WORKSPACES</span>
<span class="t" style="left:652.60px;top:100.30px;font-size:29.3px;color:#a2a3bd;letter-spacing:-0.031px;">Sign in</span>
<span class="t" style="left:177.70px;top:168.81px;font-size:32px;color:#dde0ec;letter-spacing:-0.021px;">default_workspace</span>
<span class="t" style="left:203.40px;top:322.19px;font-size:28.6px;color:#a2a3bd;letter-spacing:0.537px;">.deps</span>
<span class="t" style="left:203.40px;top:364.19px;font-size:28.6px;color:#a2a3bd;letter-spacing:0.678px;">.states</span>
<span class="t" style="left:207.60px;top:407.19px;font-size:28.6px;color:#ea635b;letter-spacing:0.999px;">contracts</span>
<span class="t" style="left:229.70px;top:449.19px;font-size:28.6px;color:#a2a3bd;letter-spacing:0.999px;">artifacts</span>
<span class="t" style="left:220.60px;top:491.19px;font-size:28.6px;color:#a2a3bd;letter-spacing:0.100px;">1_Storage.sol</span>
<span class="t" style="left:219.40px;top:533.19px;font-size:28.6px;color:#a2a3bd;letter-spacing:0.381px;">2_Owner.sol</span>
<span class="t" style="left:219.40px;top:575.19px;font-size:28.6px;color:#a2a3bd;letter-spacing:0.539px;">3_Ballot.sol</span>
<span class="t" style="left:219.30px;top:617.19px;font-size:28.6px;color:#ea635b;letter-spacing:0.387px;">Gmonad.sol</span>
<span class="t" style="left:204.40px;top:659.19px;font-size:28.6px;color:#a2a3bd;letter-spacing:0.847px;">scripts</span>
<span class="t" style="left:204.40px;top:702.19px;font-size:28.6px;color:#a2a3bd;letter-spacing:0.653px;">tests</span>
<span class="t" style="left:192.50px;top:744.19px;font-size:28.6px;color:#a2a3bd;letter-spacing:0.877px;">.prettierrc.json</span>
<span class="t" style="left:192.56px;top:787.19px;font-size:28.6px;color:#a2a3bd;letter-spacing:0.233px;transform:scaleX(0.97);transform-origin:0 0;">README.txt</span>
<span class="t" style="left:742.00px;top:618.19px;font-size:28.6px;color:#ea635b;">1</span>
<span class="t" style="left:1199.20px;top:25.62px;font-size:28.8px;color:#a2a3bd;letter-spacing:0.400px;">Home</span>
<span class="t" style="left:1396.30px;top:25.89px;font-size:28.6px;color:#ea635b;letter-spacing:0.254px;">Gmonad.sol</span>
<span class="t" style="left:1569.60px;top:25.89px;font-size:28.6px;color:#ea635b;">1</span>
<span class="t" style="left:1702.90px;top:25.99px;font-size:28.6px;color:#a2a3bd;letter-spacing:0.557px;">3_Ballot.sol</span>
<span class="t" style="left:1783.90px;top:1245.79px;font-size:28.6px;color:#a2a3bd;">0</span>
<span class="t" style="left:1906.80px;top:1243.14px;font-size:29.6px;color:#4f5268;letter-spacing:0.251px;">Listen on all transactions</span>
<span class="t" style="left:2371.10px;top:1244.51px;font-size:32px;color:#8b8e99;letter-spacing:0.085px;">Filter with transaction hash or address</span>
<span class="t m" style="left:841.90px;top:1287.55px;font-size:26.3px;color:#a2a3bd;clip-path:inset(9.4px 0 0 0);">•</span>
<span class="t m" style="left:869.97px;top:1287.55px;font-size:26.3px;color:#a2a3bd;clip-path:inset(9.4px 0 0 0);">sol-gpt </span>
<span class="t m" style="left:996.64px;top:1287.55px;font-size:26.3px;color:#a2a3bd;font-style:italic;clip-path:inset(9.4px 0 0 0);">&lt;your Solidity question here&gt;</span>
<span class="t m" style="left:870.00px;top:1354.55px;font-size:26.3px;color:#a2a3bd;">Type the library name to see available commands.</span>
<span class="t m" style="left:800.20px;top:1459.05px;font-size:26.3px;color:#d4d4d8;">&gt;</span>
<span class="t" style="left:63.30px;top:1535.32px;font-size:23.6px;color:#ffffff;letter-spacing:0.209px;-webkit-text-stroke-width:0.4px;">Scam Alert</span>
<span class="t" style="left:251.10px;top:1535.32px;font-size:23.6px;color:#ffffff;letter-spacing:0.436px;-webkit-text-stroke-width:0.4px;">Initialize as git repo</span>
<span class="t" style="left:845.80px;top:1535.32px;font-size:23.6px;color:#ffffff;letter-spacing:-0.088px;font-weight:700;">Did you know?</span>
<span class="t" style="left:1031.90px;top:1535.32px;font-size:23.6px;color:#ffffff;letter-spacing:0.352px;-webkit-text-stroke-width:0.4px;">To prototype on a uniswap v4 hooks, you can create a Multi Sig Swap Hook workspace. Template created by the cookbook team.</span>
<span class="t" style="left:2733.10px;top:1536.02px;font-size:23.6px;color:#ffffff;letter-spacing:0.232px;-webkit-text-stroke-width:0.4px;">RemixAI Copilot (enabled)</span>
<div style="position:absolute;left:982.1px;top:69.3px;width:1601.5px;height:829.6px;border:15.6px solid #ea3f24;box-sizing:border-box"></div>
<div style="position:absolute;left:118px;top:586.5px;width:662.5px;height:85px;border:15.3px solid #ea3f24;box-sizing:border-box"></div>
</body></html>
